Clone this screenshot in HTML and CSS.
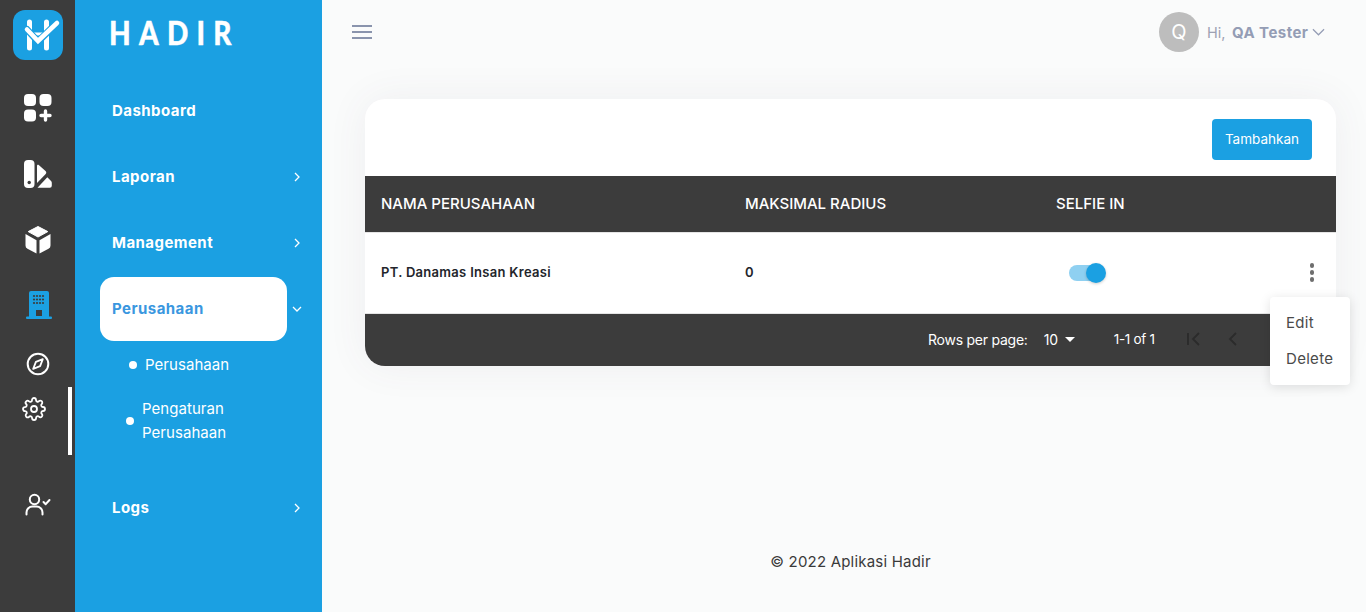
FILE: index.html
```html
<!DOCTYPE html>
<html lang="id">
<head>
<meta charset="utf-8">
<title>Hadir</title>
<link rel="stylesheet" href="styles.css">
</head>
<body>
<div class="app">
  <nav class="rail">
    <div class="rail-logo">
      <svg width="50" height="50" viewBox="0 0 50 50" fill="none" stroke="#fff" stroke-linecap="round">
        <path d="M16.500 12v26M33.500 12v26" stroke-width="5"/>
        <path d="M17 24h16" stroke-width="3"/>
        <path d="M14 19.500l11 12L44 13" stroke="#1ba0e2" stroke-width="7"/>
        <path d="M14 19.500l11 11.500L44 13" stroke-width="4.500"/>
      </svg>
    </div>
    <a class="rail-item rail-apps">
      <svg width="28" height="28" viewBox="0 0 28 28" fill="#fff"><rect x="0" y="0" width="12" height="12" rx="4"/><rect x="15.500" y="0" width="12" height="12" rx="4"/><rect x="0" y="15.500" width="12" height="12" rx="4"/><path d="M21.500 17v9M17 21.500h9" stroke="#fff" stroke-width="3.400" stroke-linecap="round"/></svg>
    </a>
    <a class="rail-item rail-report">
      <svg width="28" height="28" viewBox="0 0 28 28" fill="#fff"><rect x="0" y="0" width="10.500" height="28" rx="4"/><circle cx="5.200" cy="22.500" r="1.700" fill="#3c3c3c"/><path d="M13 6c0-1.200 1-1.600 2-.8l6.500 5.800c1 1 1 2 .2 3L13 23z"/><path d="M13.500 27.800l9.800-10.500 3.500 3.400c.7.700 1 1.300 1 2.300v2.800a2 2 0 0 1-2 2z"/></svg>
    </a>
    <a class="rail-item rail-box">
      <svg width="26" height="28" viewBox="0 0 26 28" fill="#fff"><path d="M13 .5l9.800 5.100L13 11 3.200 5.600z" stroke="#fff" stroke-linejoin="round"/><path d="M.5 8l11 6.300V27.500L2.500 22.800A3.500 3.500 0 0 1 .5 19.500z"/><path d="M25.500 8l-11 6.300V27.500l9-4.700a3.500 3.500 0 0 0 2-3.300z"/></svg>
    </a>
    <a class="rail-item rail-building">
      <svg width="26" height="28" viewBox="0 0 26 28"><path d="M3 2a2 2 0 0 1 2-2h16a2 2 0 0 1 2 2v24H3z" fill="#1ba0e2"/><rect x="0" y="25.500" width="26" height="2.500" rx="1" fill="#1ba0e2"/><g fill="#3c3c3c"><circle cx="8" cy="5" r="1.100"/><circle cx="11" cy="5" r="1.100"/><circle cx="14" cy="5" r="1.100"/><circle cx="17" cy="5" r="1.100"/><circle cx="8" cy="8.500" r="1.100"/><circle cx="11" cy="8.500" r="1.100"/><circle cx="14" cy="8.500" r="1.100"/><circle cx="17" cy="8.500" r="1.100"/><circle cx="8" cy="12" r="1.100"/><circle cx="11" cy="12" r="1.100"/><circle cx="14" cy="12" r="1.100"/><circle cx="17" cy="12" r="1.100"/><rect x="10" y="19" width="6" height="6"/></g></svg>
    </a>
    <a class="rail-item rail-compass">
      <svg width="24" height="24" viewBox="0 0 24 24" fill="none" stroke="#fff"><circle cx="12" cy="12" r="10.300" stroke-width="2"/><path d="M16.800 7.200l-2.700 6.900-6.900 2.700 2.700-6.900z" stroke-width="1.800" stroke-linejoin="round"/></svg>
    </a>
    <a class="rail-item rail-gear">
      <svg width="24" height="24" viewBox="0 0 24 24" fill="none" stroke="#fff" stroke-width="1.800" stroke-linejoin="round"><circle cx="12" cy="12" r="3"/><path d="M19.400 15a1.650 1.650 0 0 0 .33 1.820l.06.06a2 2 0 1 1-2.830 2.830l-.06-.06a1.650 1.650 0 0 0-1.820-.33 1.650 1.650 0 0 0-1 1.510V21a2 2 0 1 1-4 0v-.09A1.650 1.650 0 0 0 9 19.400a1.650 1.650 0 0 0-1.820.33l-.06.06a2 2 0 1 1-2.830-2.830l.06-.06a1.650 1.650 0 0 0 .33-1.820 1.650 1.650 0 0 0-1.510-1H3a2 2 0 1 1 0-4h.09A1.650 1.650 0 0 0 4.600 9a1.650 1.650 0 0 0-.33-1.820l-.06-.06a2 2 0 1 1 2.830-2.830l.06.06a1.650 1.650 0 0 0 1.820.33H9a1.650 1.650 0 0 0 1-1.510V3a2 2 0 1 1 4 0v.09a1.650 1.650 0 0 0 1 1.510 1.650 1.650 0 0 0 1.820-.33l.06-.06a2 2 0 1 1 2.830 2.830l-.06.06a1.650 1.650 0 0 0-.33 1.820V9a1.650 1.650 0 0 0 1.510 1H21a2 2 0 1 1 0 4h-.09a1.650 1.650 0 0 0-1.510 1z"/></svg>
    </a>
    <a class="rail-item rail-user">
      <svg width="26" height="24" viewBox="0 0 26 24" fill="none" stroke="#fff" stroke-width="2" stroke-linecap="round" stroke-linejoin="round"><circle cx="9.500" cy="6.500" r="4.700"/><path d="M1.500 21.500v-2a6 6 0 0 1 6-6h4a6 6 0 0 1 6 6v2"/><path d="M18.500 9l2.200 2.200 3.800-4.200"/></svg>
    </a>
    <span class="rail-indicator"></span>
  </nav>

  <aside class="side">
    <div class="brand">HADIR</div>
    <ul class="menu">
      <li class="menu-row"><a class="menu-link">Dashboard</a></li>
      <li class="menu-row"><a class="menu-link">Laporan</a><svg class="chev" viewBox="0 0 10 10"><path d="M3 1l4 4-4 4"/></svg></li>
      <li class="menu-row"><a class="menu-link">Management</a><svg class="chev" viewBox="0 0 10 10"><path d="M3 1l4 4-4 4"/></svg></li>
      <li class="menu-row"><a class="menu-link active">Perusahaan</a><svg class="chev" viewBox="0 0 10 10"><path d="M1 3l4 4 4-4"/></svg></li>
    </ul>
    <ul class="submenu">
      <li class="sub-one"><span class="dot"></span>Perusahaan</li>
      <li class="sub-two"><span class="dot"></span><span>Pengaturan<br>Perusahaan</span></li>
    </ul>
    <ul class="menu menu-last">
      <li class="menu-row"><a class="menu-link">Logs</a><svg class="chev" viewBox="0 0 10 10"><path d="M3 1l4 4-4 4"/></svg></li>
    </ul>
  </aside>

  <main class="main">
    <header class="topbar">
      <button class="burger" aria-label="Menu"><i></i><i></i><i></i></button>
      <div class="account">
        <span class="avatar">Q</span>
        <span class="hi">Hi,</span>
        <strong class="name">QA Tester</strong>
        <svg class="caret" viewBox="0 0 14 8"><path d="M1 1l6 6 6-6"/></svg>
      </div>
    </header>

    <section class="card">
      <div class="card-top"><button class="btn">Tambahkan</button></div>
      <table class="table">
        <thead>
          <tr><th class="c1">NAMA PERUSAHAAN</th><th class="c2">MAKSIMAL RADIUS</th><th class="c3">SELFIE IN</th><th class="c4"></th></tr>
        </thead>
        <tbody>
          <tr>
            <td class="c1">PT. Danamas Insan Kreasi</td>
            <td class="c2">0</td>
            <td class="c3"><span class="switch"><span class="knob"></span></span></td>
            <td class="c4"><span class="kebab"><i></i><i></i><i></i></span></td>
          </tr>
        </tbody>
      </table>
      <div class="pager">
        <span class="rows-label">Rows per page:</span>
        <span class="rows-val">10</span>
        <span class="rows-caret"></span>
        <span class="range">1-1 of 1</span>
        <svg class="pg-first" viewBox="0 0 16 14"><path d="M2 1v12M13 1L7 7l6 6"/></svg>
        <svg class="pg-prev" viewBox="0 0 10 14"><path d="M8 1L2 7l6 6"/></svg>
      </div>
      <div class="popup"><div>Edit</div><div>Delete</div></div>
    </section>

    <footer class="foot">© 2022 Aplikasi Hadir</footer>
  </main>
</div>
</body>
</html>
```
FILE: styles.css
```css
* { box-sizing: border-box; }
html, body { margin: 0; height: 612px; overflow: hidden; }
body { font-family: "Inter", "Liberation Sans", sans-serif; background: #fafbfb; }
ul { list-style: none; margin: 0; padding: 0; }
.app { display: flex; height: 612px; }

.rail { position: relative; width: 75px; flex: none; background: #3c3c3c; display: flex; flex-direction: column; align-items: center; padding-top: 10px; }
.rail-logo { width: 50px; height: 50px; border-radius: 12px; background: #1ba0e2; display: flex; align-items: center; justify-content: center; }
.rail-item { display: flex; justify-content: center; align-items: center; height: 28px; }
.rail-apps { margin-top: 34px; }
.rail-report { margin-top: 38px; }
.rail-box { margin-top: 38px; }
.rail-building { margin-top: 37px; margin-left: 3px; }
.rail-compass { margin-top: 33px; height: 24px; }
.rail-gear { margin-top: 21px; margin-left: -7px; height: 24px; }
.rail-user { margin-top: 70px; }
.rail-indicator { position: absolute; left: 68px; top: 387px; width: 4px; height: 68px; background: #fff; }

.side { width: 247px; flex: none; background: #1ba0e2; color: #fff; padding-left: 25px; }
.brand { font-family: "Lato", sans-serif; font-weight: 900; font-size: 33px; line-height: 26px; letter-spacing: 9.700px; margin: 19px 0 0 9px; height: 26px; white-space: nowrap; -webkit-text-stroke: .4px #fff; transform: scaleX(.85); transform-origin: left center; }
.menu { margin-top: 33px; }
.menu-row { display: flex; align-items: center; height: 66px; }
.menu-link { display: flex; align-items: center; width: 187px; height: 64px; padding: 0 0 2px 12px; font-size: 15px; font-weight: 700; border-radius: 14px; letter-spacing: .45px; }
.menu-link.active { background: #fff; color: #3a97df; }
.chev { width: 10px; height: 10px; margin-left: 5px; fill: none; stroke: #fff; stroke-width: 1.300; }
.submenu { font-size: 15px; line-height: 24px; letter-spacing: .05px; }
.sub-one { display: flex; align-items: center; margin: 11px 0 0 29px; height: 24px; }
.sub-two { display: flex; align-items: center; margin: 20px 0 0 26px; }
.dot { width: 8px; height: 8px; border-radius: 50%; background: #fff; margin-right: 8px; flex: none; }
.menu-last { margin-top: 30px; }

.main { flex: 1; min-width: 0; display: flex; flex-direction: column; padding: 0 30px 0 43px; }
.topbar { display: flex; align-items: center; justify-content: space-between; height: 64px; margin-bottom: 35px; }
.burger { display: flex; flex-direction: column; gap: 4px; width: 20px; padding: 0; margin-left: -13px; border: 0; background: none; }
.burger i { display: block; height: 2px; background: #8a94ad; }
.account { display: flex; align-items: center; margin-right: 11px; font-size: 15px; color: #9da1b3; }
.avatar { width: 40px; height: 40px; border-radius: 50%; background: #bdbdbd; color: #fff; font-size: 20px; display: flex; align-items: center; justify-content: center; }
.hi { margin-left: 8px; width: 18px; font-size: 14.500px; white-space: nowrap; }
.name { margin-left: 7px; width: 76px; font-weight: 700; color: #949db5; letter-spacing: .45px; white-space: nowrap; }
.caret { width: 13px; height: 8px; margin-left: 4px; fill: none; stroke: #949db5; stroke-width: 1.300; }

.card { position: relative; height: 267px; background: #fff; border-radius: 20px; box-shadow: 0 0 40px rgba(82, 70, 105, .07); display: flex; flex-direction: column; }
.card-top { height: 77px; display: flex; justify-content: flex-end; align-items: flex-start; padding: 20px 24px 0 0; }
.btn { width: 100px; height: 41px; padding: 0 0 2px; border: 0; border-radius: 4px; background: #1ba0e2; color: #fff; font: 400 13.500px "Inter", sans-serif; letter-spacing: .02px; }
.table { width: 100%; border-collapse: collapse; table-layout: fixed; }
.table th { height: 56px; background: #3c3c3c; color: #fff; font-size: 15px; font-weight: 500; text-align: left; padding: 0 16px; }
.table td { height: 81px; border-top: 1px solid #e5e5e5; border-bottom: 1px solid #e5e5e5; padding: 0 16px 2px; font-size: 13px; font-weight: 600; color: #23252b; letter-spacing: .3px; }
.c1 { width: 364px; }
.c2 { width: 311px; }
.c3 { width: 212px; }
.c4 { width: 84px; }
.switch { position: relative; display: block; width: 34px; height: 16px; margin: 2px 0 0 13px; border-radius: 8px; background: #8fd0f1; }
.knob { position: absolute; right: -3px; top: -2px; width: 20px; height: 20px; border-radius: 50%; background: #1ba0e2; box-shadow: 0 1px 3px rgba(0, 0, 0, .2); }
.kebab { display: flex; flex-direction: column; gap: 2.500px; align-items: flex-end; padding: 2px 6px 0 0; }
.kebab i { width: 4.500px; height: 4.500px; border-radius: 50%; background: #6e6e6e; }
.pager { flex: 1; background: #3c3c3c; border-radius: 0 0 20px 20px; display: flex; align-items: center; color: #fff; font-size: 14px; padding: 0 0 1px 563px; letter-spacing: -0.24px; }
.rows-val { margin-left: 16px; }
.rows-caret { margin-left: 7px; border: 5px solid transparent; border-top-color: #fff; border-bottom: 0; }
.range { width: 40px; margin-left: 39px; font-size: 13.500px; letter-spacing: -.3px; white-space: nowrap; }
.pg-first { width: 16px; height: 14px; margin-left: 32px; fill: none; stroke: #2b2b2b; stroke-width: 1.800; }
.pg-prev { width: 10px; height: 14px; margin-left: 26px; fill: none; stroke: #2b2b2b; stroke-width: 1.800; }
.popup { position: absolute; left: 905px; top: 198px; width: 80px; height: 88px; padding-top: 8px; background: #fff; border-radius: 4px; box-shadow: 0 2px 12px rgba(0, 0, 0, .12); color: #4a4a4a; font-size: 15px; letter-spacing: .3px; }
.popup div { height: 36px; line-height: 36px; padding-left: 16px; }

.foot { margin-top: 186px; text-align: center; font-size: 15px; color: #3a3a3a; line-height: 20px; letter-spacing: .2px; }
```
